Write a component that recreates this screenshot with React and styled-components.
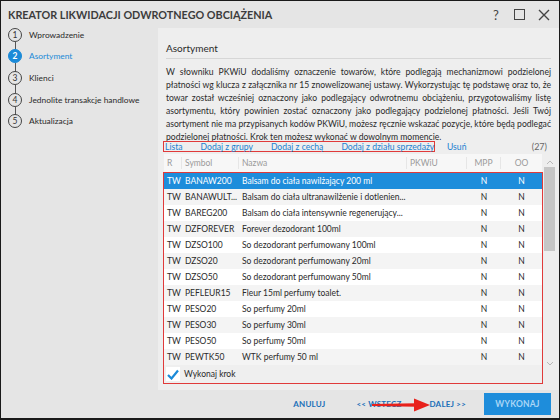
import React from 'react';
import styled, { createGlobalStyle } from 'styled-components';

const GlobalStyle = createGlobalStyle`
    html, body {
        margin: 0;
        padding: 0;
        background: #e5e5e5;
    }
    * {
        box-sizing: border-box;
    }
`;

const FONT = `Lato, "Noto Sans", sans-serif`;

const steps = ['Wprowadzenie', 'Asortyment', 'Klienci', 'Jednolite transakcje handlowe', 'Aktualizacja'];

const intro = [
    'W słowniku PKWiU dodaliśmy oznaczenie towarów, które podlegają mechanizmowi podzielonej',
    'płatności wg klucza z załącznika nr 15 znowelizowanej ustawy. Wykorzystując tę podstawę oraz to, że',
    'towar został wcześniej oznaczony jako podlegający odwrotnemu obciążeniu, przygotowaliśmy listę',
    'asortymentu, który powinien zostać oznaczony jako podlegający podzielonej płatności. Jeśli Twój',
    'asortyment nie ma przypisanych kodów PKWiU, możesz ręcznie wskazać pozycje, które będą podlegać',
    'podzielonej płatności. Krok ten możesz wykonać w dowolnym momencie.',
];

const links = ['Lista', 'Dodaj z grupy', 'Dodaj z cechą', 'Dodaj z działu sprzedaży'];

const rows = [
    ['BANAW200', 'Balsam do ciała nawilżający 200 ml'],
    ['BANAWULT...', 'Balsam do ciała ultranawilżenie i dotlenien...'],
    ['BAREG200', 'Balsam do ciała intensywnie regenerujący...'],
    ['DZFOREVER', 'Forever dezodorant 100ml'],
    ['DZSO100', 'So dezodorant perfumowany 100ml'],
    ['DZSO20', 'So dezodorant perfumowany 20ml'],
    ['DZSO50', 'So dezodorant perfumowany 50ml'],
    ['PEFLEUR15', 'Fleur 15ml perfumy toalet.'],
    ['PESO20', 'So perfumy 20ml'],
    ['PESO30', 'So perfumy 30ml'],
    ['PESO50', 'So perfumy 50ml'],
    ['PEWTK50', 'WTK perfumy 50 ml'],
];

const App = () => {
    return (
        <>
            <GlobalStyle />
            <Window>
                <TitleBar>
                    <Title>KREATOR LIKWIDACJI ODWROTNEGO OBCIĄŻENIA</Title>
                    <WinButtons>
                        <Help>?</Help>
                        <MaxBox />
                        <svg width="12" height="12" viewBox="0 0 12 12">
                            <path d="M1 1 L11 11 M11 1 L1 11" stroke="#444" strokeWidth="1.4" />
                        </svg>
                    </WinButtons>
                </TitleBar>

                <Body>
                    <Sidebar>
                        {steps.map((s, i) => (
                            <Step key={s} last={i === steps.length - 1}>
                                <Circle active={i === 1}>{i + 1}</Circle>
                                <StepLabel active={i === 1}>{s}</StepLabel>
                            </Step>
                        ))}
                    </Sidebar>

                    <Panel>
                        <Heading>Asortyment</Heading>
                        <Intro>
                            {intro.map((l, i) => (
                                <IntroLine key={i} last={i === intro.length - 1}>{l}</IntroLine>
                            ))}
                        </Intro>

                        <Toolbar>
                            <LinkGroup>
                                {links.map((l) => <ToolLink key={l}>{l}</ToolLink>)}
                            </LinkGroup>
                            <ToolLink>Usuń</ToolLink>
                            <Count>(27)</Count>
                        </Toolbar>

                        <TableArea>
                            <Table>
                                <HeaderRow>
                                    <HeadCell>R</HeadCell>
                                    <HeadCell>Symbol</HeadCell>
                                    <HeadCell>Nazwa</HeadCell>
                                    <HeadCell>PKWiU</HeadCell>
                                    <HeadCell center>MPP</HeadCell>
                                    <HeadCell center last>OO</HeadCell>
                                </HeaderRow>
                                <Rows>
                                    {rows.map(([sym, name], i) => (
                                        <Row key={sym} selected={i === 0} odd={i % 2 === 1}>
                                            <Cell>TW</Cell>
                                            <Cell>{sym}</Cell>
                                            <Cell>{name}</Cell>
                                            <Cell></Cell>
                                            <Cell center>N</Cell>
                                            <Cell center>N</Cell>
                                        </Row>
                                    ))}
                                    <CheckRow>
                                        <CheckBox>
                                            <svg width="12" height="11" viewBox="0 0 12 11">
                                                <path d="M1 6 L4.5 9.5 L11 1.5" stroke="#1a8ad8" strokeWidth="2.2" fill="none" />
                                            </svg>
                                        </CheckBox>
                                        <span>Wykonaj krok</span>
                                    </CheckRow>
                                </Rows>
                            </Table>
                            <Scrollbar>
                                <svg width="8" height="6" viewBox="0 0 8 6">
                                    <path d="M1 5 L4 2 L7 5" stroke="#b8b8b8" strokeWidth="1" fill="none" />
                                </svg>
                                <Track>
                                    <Thumb />
                                </Track>
                                <svg width="8" height="6" viewBox="0 0 8 6">
                                    <path d="M1 1 L4 4 L7 1" stroke="#b8b8b8" strokeWidth="1" fill="none" />
                                </svg>
                            </Scrollbar>
                        </TableArea>
                    </Panel>
                </Body>

                <Footer>
                    <NavButton gap={31}>ANULUJ</NavButton>
                    <NavButton gap={28}>&lt;&lt; WSTECZ</NavButton>
                    <NavButton gap={18}>DALEJ &gt;&gt;</NavButton>
                    <PrimaryButton>WYKONAJ</PrimaryButton>
                    <Arrow width="60" height="14" viewBox="0 0 60 14">
                        <path d="M0 6 L44 5.2 L44 8.8 L0 8 Z" fill="#e8211b" />
                        <path d="M42 0.5 L58 7 L42 13.5 Z" fill="#e8211b" />
                    </Arrow>
                </Footer>
            </Window>
        </>
    );
};

const Window = styled.div`
    width: 560px;
    height: 420px;
    border: 1px solid #1a1a1a;
    border-bottom-width: 2px;
    background: #e5e5e5;
    display: flex;
    flex-direction: column;
    font-family: ${FONT};
    color: #2a2a2a;
    overflow: hidden;
    position: relative;
`;

const TitleBar = styled.div`
    height: 27px;
    display: flex;
    align-items: center;
    justify-content: space-between;
    padding: 0 9px 0 7px;
`;

const Title = styled.div`
    font-size: 10.8px;
    font-weight: 700;
    color: #3c3c3c;
`;

const WinButtons = styled.div`
    display: flex;
    align-items: center;
    gap: 13px;
`;

const Help = styled.span`
    font-size: 13px;
    color: #444;
    width: 10px;
    text-align: center;
`;

const MaxBox = styled.span`
    width: 11px;
    height: 11px;
    border: 1.4px solid #444;
`;

const Body = styled.div`
    display: flex;
    height: 362px;
`;

const Sidebar = styled.div`
    width: 157px;
    flex-shrink: 0;
    margin-top: -4px;
    padding: 0 0 0 7px;
    display: flex;
    flex-direction: column;
`;

const Step = styled.div`
    display: flex;
    align-items: center;
    gap: 7px;
    height: 21.6px;
    position: relative;
    &::after {
        content: '';
        display: ${(p) => (p.last ? 'none' : 'block')};
        position: absolute;
        left: 7px;
        top: 17px;
        height: 9px;
        width: 1px;
        background: #555;
    }
`;

const Circle = styled.div`
    width: 14px;
    height: 14px;
    border-radius: 50%;
    border: 1px solid ${(p) => (p.active ? '#1a8ad8' : '#444')};
    background: ${(p) => (p.active ? '#1a8ad8' : 'transparent')};
    color: ${(p) => (p.active ? '#fff' : '#333')};
    font-size: 8.5px;
    font-weight: ${(p) => (p.active ? 700 : 400)};
    display: flex;
    align-items: center;
    justify-content: center;
    flex-shrink: 0;
`;

const StepLabel = styled.span`
    font-size: 8.4px;
    white-space: nowrap;
    color: ${(p) => (p.active ? '#1a8ad8' : '#2a2a2a')};
`;

const Panel = styled.div`
    flex: 1;
    min-width: 0;
    background: #eeeeee;
    padding: 0 2px 6px 5px;
    display: flex;
    flex-direction: column;
`;

const Heading = styled.div`
    margin: 12px 6px 0 3px;
    font-size: 10px;
    line-height: 16px;
    padding-bottom: 2px;
    border-bottom: 1px solid #d6d6d6;
    color: #2a2a2a;
`;

const Intro = styled.div`
    margin: 7px 6px 0 3px;
    font-size: 8.6px;
    line-height: 13px;
`;

const IntroLine = styled.div`
    white-space: nowrap;
    text-align: justify;
    text-align-last: ${(p) => (p.last ? 'left' : 'justify')};
`;

const Toolbar = styled.div`
    display: flex;
    align-items: center;
    margin-top: -3px;
    height: 11px;
    gap: 12px;
    padding-right: 10px;
`;

const LinkGroup = styled.div`
    display: flex;
    align-items: center;
    gap: 18px;
    border: 1px solid #e03a3a;
    height: 11px;
    padding: 0 1px;
    width: 272px;
`;

const ToolLink = styled.span`
    font-size: 8.6px;
    color: #1a7fd0;
    line-height: 10px;
    white-space: nowrap;
`;

const Count = styled.span`
    margin-left: auto;
    font-size: 9px;
    color: #666;
`;

const TableArea = styled.div`
    display: flex;
    margin-top: 2px;
    gap: 1px;
`;

const Table = styled.div`
    width: 380px;
    display: flex;
    flex-direction: column;
`;

const cols = '18px 57px 168px 60px 34px 41px';

const HeaderRow = styled.div`
    display: grid;
    grid-template-columns: ${cols};
    height: 18px;
    margin: 0 1px;
    background: #f7f7f7;
    align-items: center;
`;

const HeadCell = styled.div`
    font-size: 8.5px;
    color: #9a9a9a;
    padding: 0 3px;
    height: 12px;
    line-height: 12px;
    text-align: ${(p) => (p.center ? 'center' : 'left')};
    border-right: ${(p) => (p.last ? 'none' : '1px solid #e6e6e6')};
`;

const Rows = styled.div`
    border: 1px solid #e03a3a;
    display: flex;
    flex-direction: column;
`;

const Row = styled.div`
    display: grid;
    grid-template-columns: ${cols};
    height: 16px;
    align-items: center;
    background: ${(p) => (p.selected ? '#1e8ddb' : p.odd ? '#f4f4f4' : '#ffffff')};
    color: ${(p) => (p.selected ? '#fff' : '#2a2a2a')};
`;

const Cell = styled.div`
    font-size: 8.5px;
    padding: 0 3px;
    white-space: nowrap;
    text-align: ${(p) => (p.center ? 'center' : 'left')};
`;

const CheckRow = styled.div`
    height: 18px;
    display: flex;
    align-items: center;
    gap: 4px;
    padding-left: 2px;
    background: #efefef;
    font-size: 8.5px;
`;

const CheckBox = styled.div`
    width: 14px;
    height: 14px;
    background: #fff;
    display: flex;
    align-items: center;
    justify-content: center;
`;

const Scrollbar = styled.div`
    width: 11px;
    height: 213px;
    display: flex;
    flex-direction: column;
    align-items: center;
    padding-top: 5px;
    gap: 2px;
`;

const Track = styled.div`
    flex: 1;
    width: 100%;
    padding-bottom: 100px;
`;

const Thumb = styled.div`
    width: 100%;
    height: 84px;
    background: #c6c6c6;
`;

const Footer = styled.div`
    flex: 1;
    display: flex;
    align-items: center;
    justify-content: flex-end;
    padding: 0 8px 0 0;
    position: relative;
`;

const NavButton = styled.span`
    font-size: 8px;
    font-weight: 700;
    color: #1a6fb8;
    margin-right: ${(p) => p.gap}px;
    letter-spacing: 0.2px;
`;

const PrimaryButton = styled.div`
    width: 67px;
    height: 22px;
    background: #1e8ddb;
    color: #a9d6f6;
    font-size: 8.5px;
    font-weight: 700;
    letter-spacing: 0.2px;
    display: flex;
    align-items: center;
    justify-content: center;
`;

const Arrow = styled.svg`
    position: absolute;
    left: 371px;
    top: 8px;
`;

export default App;
